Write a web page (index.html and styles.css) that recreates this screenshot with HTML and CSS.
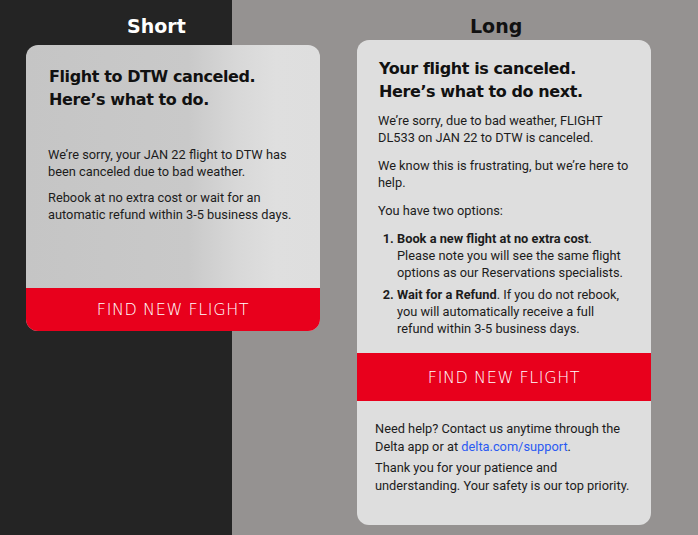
FILE: index.html
```html
<!DOCTYPE html>
<html lang="en">
<head>
<meta charset="utf-8">
<title>Flight canceled notices</title>
<link rel="stylesheet" href="styles.css">
</head>
<body>
<main class="stage">
  <section class="column column--short">
    <h2 class="label label--short">Short</h2>
    <article class="card card--short">
      <div class="card-body card-body--short">
        <h1 class="title">Flight to DTW canceled.<br>Here’s what to do.</h1>
        <div class="copy copy--short">
          <p>We’re sorry, your JAN 22 flight to DTW has been canceled due to bad weather.</p>
          <p>Rebook at no extra cost or wait for an automatic refund within 3-5 business days.</p>
        </div>
      </div>
      <button class="cta cta--short" type="button">FIND NEW FLIGHT</button>
    </article>
  </section>
  <section class="column column--long">
    <h2 class="label label--long">Long</h2>
    <article class="card card--long">
      <div class="card-body card-body--long">
        <h1 class="title">Your flight is canceled.<br>Here’s what to do next.</h1>
        <div class="copy copy--long">
          <p>We’re sorry, due to bad weather, FLIGHT DL533 on JAN 22 to DTW is canceled.</p>
          <p>We know this is frustrating, but we’re here to help.</p>
          <p>You have two options:</p>
          <ol class="options">
            <li><strong>Book a new flight at no extra cost</strong>. Please note you will see the same flight options as our Reservations specialists.</li>
            <li><strong>Wait for a Refund</strong>. If you do not rebook, you will automatically receive a full refund within 3-5 business days.</li>
          </ol>
        </div>
      </div>
      <button class="cta cta--long" type="button">FIND NEW FLIGHT</button>
      <div class="footer">
        <p>Need help? Contact us anytime through the Delta app or at <a class="link" href="#">delta.com/support</a>.</p>
        <p>Thank you for your patience and understanding. Your safety is our top priority.</p>
      </div>
    </article>
  </section>
</main>
</body>
</html>
```

FILE: styles.css
```css
* { box-sizing: border-box; }
html, body { margin: 0; padding: 0; }
body {
  width: 698px;
  height: 535px;
  overflow: hidden;
  background: linear-gradient(90deg, #242424 0, #242424 232px, #959291 232px, #959291 100%);
  font-family: Roboto, "Liberation Sans", sans-serif;
}
.stage {
  display: flex;
  gap: 37px;
  padding-left: 26px;
  padding-top: 12px;
}
.column {
  width: 294px;
  display: flex;
  flex-direction: column;
}
.label {
  margin: 0;
  height: 28px;
  font-family: "DejaVu Sans", sans-serif;
  font-weight: 600;
  font-size: 19px;
  line-height: 28px;
}
.label--short { color: #ffffff; padding-left: 101px; }
.label--long { color: #111111; padding-left: 113px; }
.card {
  width: 294px;
  border-radius: 12px;
  overflow: hidden;
  display: flex;
  flex-direction: column;
}
.card--short {
  margin-top: 5px;
  height: 286px;
  background: linear-gradient(90deg, #c5c5c5 0%, #c9c9c9 55%, #d8d8d8 72%, #dfdfdf 85%, #dedede 100%);
}
.card--long {
  margin-top: 0;
  background: #dedede;
}
.card-body--short { flex: 1; padding: 20px 10px 0 22px; }
.card-body--long { padding: 17px 18px 16px 21px; }
.title {
  margin: 0;
  font-family: "DejaVu Sans", sans-serif;
  font-weight: 700;
  font-size: 16px;
  letter-spacing: -0.4px;
  line-height: 23px;
  color: #111111;
  padding-left: 1px;
}
.copy {
  font-size: 12.8px;
  line-height: 17px;
  color: #1c1c1c;
}
.copy p { margin: 0; }
.copy--short { margin-top: 35px; }
.copy--short p + p { margin-top: 9px; }
.copy--long { margin-top: 9px; }
.copy--long p + p, .copy--long .options { margin-top: 11px; }
.options {
  margin: 0;
  padding-left: 19px;
}
.options li + li { margin-top: 5px; }
.options li::marker { font-weight: 700; }
.options strong { font-weight: 700; }
.cta {
  border: 0;
  margin: 0;
  width: 100%;
  background: #e8001c;
  color: #ffffff;
  font-family: "DejaVu Sans", sans-serif;
  font-weight: 200;
  font-size: 16px;
  letter-spacing: 0.6px;
  display: flex;
  align-items: center;
  justify-content: center;
  padding: 0;
}
.cta--short { height: 43px; }
.cta--long { height: 48px; }
.footer {
  padding: 19px 18px 30px 18px;
  font-size: 12.8px;
  line-height: 18px;
  color: #1c1c1c;
}
.footer p { margin: 0; }
.footer p + p { margin-top: 3px; }
.link { color: #2a5af2; text-decoration: none; }
```
